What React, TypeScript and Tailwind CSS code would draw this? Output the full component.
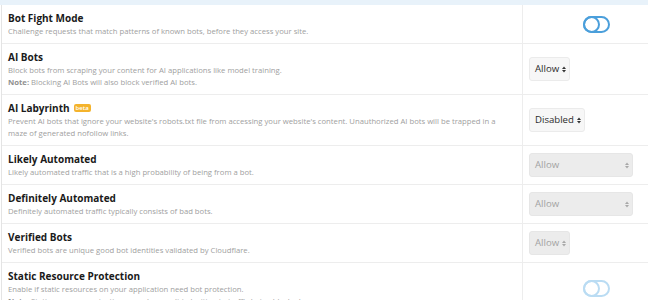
import React from "react";

function Arrows({ color }: { color: string }) {
  return (
    <svg width="4" height="7" viewBox="0 0 4 7" className="shrink-0">
      <path d="M0 3 L2 0.5 L4 3 Z" fill={color} />
      <path d="M0 4 L2 6.5 L4 4 Z" fill={color} />
    </svg>
  );
}

function Select({ label, wide, disabled }: { label: string; wide?: boolean; disabled?: boolean }) {
  return (
    <div
      className={
        "h-[24px] flex items-center rounded-[3px] pl-[5px] pr-[3px] text-[9.6px] " +
        (disabled
          ? "bg-[#ececec] text-[#a3a3a3] border border-[#e6e6e6] "
          : "bg-[#f7f7f7] text-[#2b2b2b] border border-[#ebebeb] ") +
        (wide ? "w-[104px] justify-between" : "gap-[3px]")
      }
    >
      <span>{label}</span>
      <Arrows color={disabled ? "#a8a8a8" : "#333333"} />
    </div>
  );
}

function Toggle({ faded }: { faded?: boolean }) {
  const c = faded ? "#badcf3" : "#4b9fdb";
  return (
    <svg width="27" height="17" viewBox="0 0 27 17">
      <rect x="1" y="1" width="25" height="15" rx="7.5" fill="none" stroke={c} strokeWidth="2" />
      <circle cx="8.5" cy="8.5" r="7.5" fill="none" stroke={c} strokeWidth="2" />
    </svg>
  );
}

function Row({
  title,
  badge,
  lines,
  control,
  center,
}: {
  title: string;
  badge?: boolean;
  lines: React.ReactNode[];
  control: React.ReactNode;
  center?: boolean;
}) {
  return (
    <div className="flex border-b border-[#ededed]">
      <div className="w-[520px] pl-[6px] pt-[6px] pb-[6px]">
        <div className="flex items-center gap-[4px] text-[10px] leading-[14px] font-bold text-[#1a1a1a]">
          <span>{title}</span>
          {badge && (
            <span className="bg-[#f4b32c] text-white text-[6px] leading-[8px] font-semibold px-[2px] rounded-[2px] h-[8px] flex items-center">
              beta
            </span>
          )}
        </div>
        {lines.map((l, i) => (
          <div key={i} className="text-[7.7px] leading-[12px] text-[#a0a0a0] whitespace-nowrap">
            {l}
          </div>
        ))}
      </div>
      <div
        className={
          "w-[148px] border-l border-[#ededed] flex items-center " +
          (center ? "justify-center" : "pl-[6px]")
        }
      >
        {control}
      </div>
    </div>
  );
}

export default function App() {
  return (
    <div className="w-[648px] h-[300px] overflow-hidden bg-white font-['Open_Sans',sans-serif]">
      <div className="h-[5px] bg-[#e8f2fa]" />
      <div className="ml-[1px] border-l border-[#e4e4e4] w-[670px]">
        <Row
          title="Bot Fight Mode"
          lines={["Challenge requests that match patterns of known bots, before they access your site."]}
          control={<Toggle />}
          center
        />
        <Row
          title="AI Bots"
          lines={[
            "Block bots from scraping your content for AI applications like model training.",
            <>
              <b className="font-bold text-[#909090]">Note:</b> Blocking AI Bots will also block verified AI bots.
            </>,
          ]}
          control={<Select label="Allow" />}
        />
        <Row
          title="AI Labyrinth"
          badge
          lines={[
            "Prevent AI bots that ignore your website's robots.txt file from accessing your website's content. Unauthorized AI bots will be trapped in a",
            "maze of generated nofollow links.",
          ]}
          control={<Select label="Disabled" />}
        />
        <Row
          title="Likely Automated"
          lines={["Likely automated traffic that is a high probability of being from a bot."]}
          control={<Select label="Allow" wide disabled />}
        />
        <Row
          title="Definitely Automated"
          lines={["Definitely automated traffic typically consists of bad bots."]}
          control={<Select label="Allow" wide disabled />}
        />
        <Row
          title="Verified Bots"
          lines={["Verified bots are unique good bot identities validated by Cloudflare."]}
          control={<Select label="Allow" disabled />}
        />
        <Row
          title="Static Resource Protection"
          lines={[
            "Enable if static resources on your application need bot protection.",
            <>
              <b className="font-bold text-[#909090]">Note:</b> Static resource protection may also result in legitimate traffic being blocked.
            </>,
          ]}
          control={<Toggle faded />}
          center
        />
      </div>
    </div>
  );
}
